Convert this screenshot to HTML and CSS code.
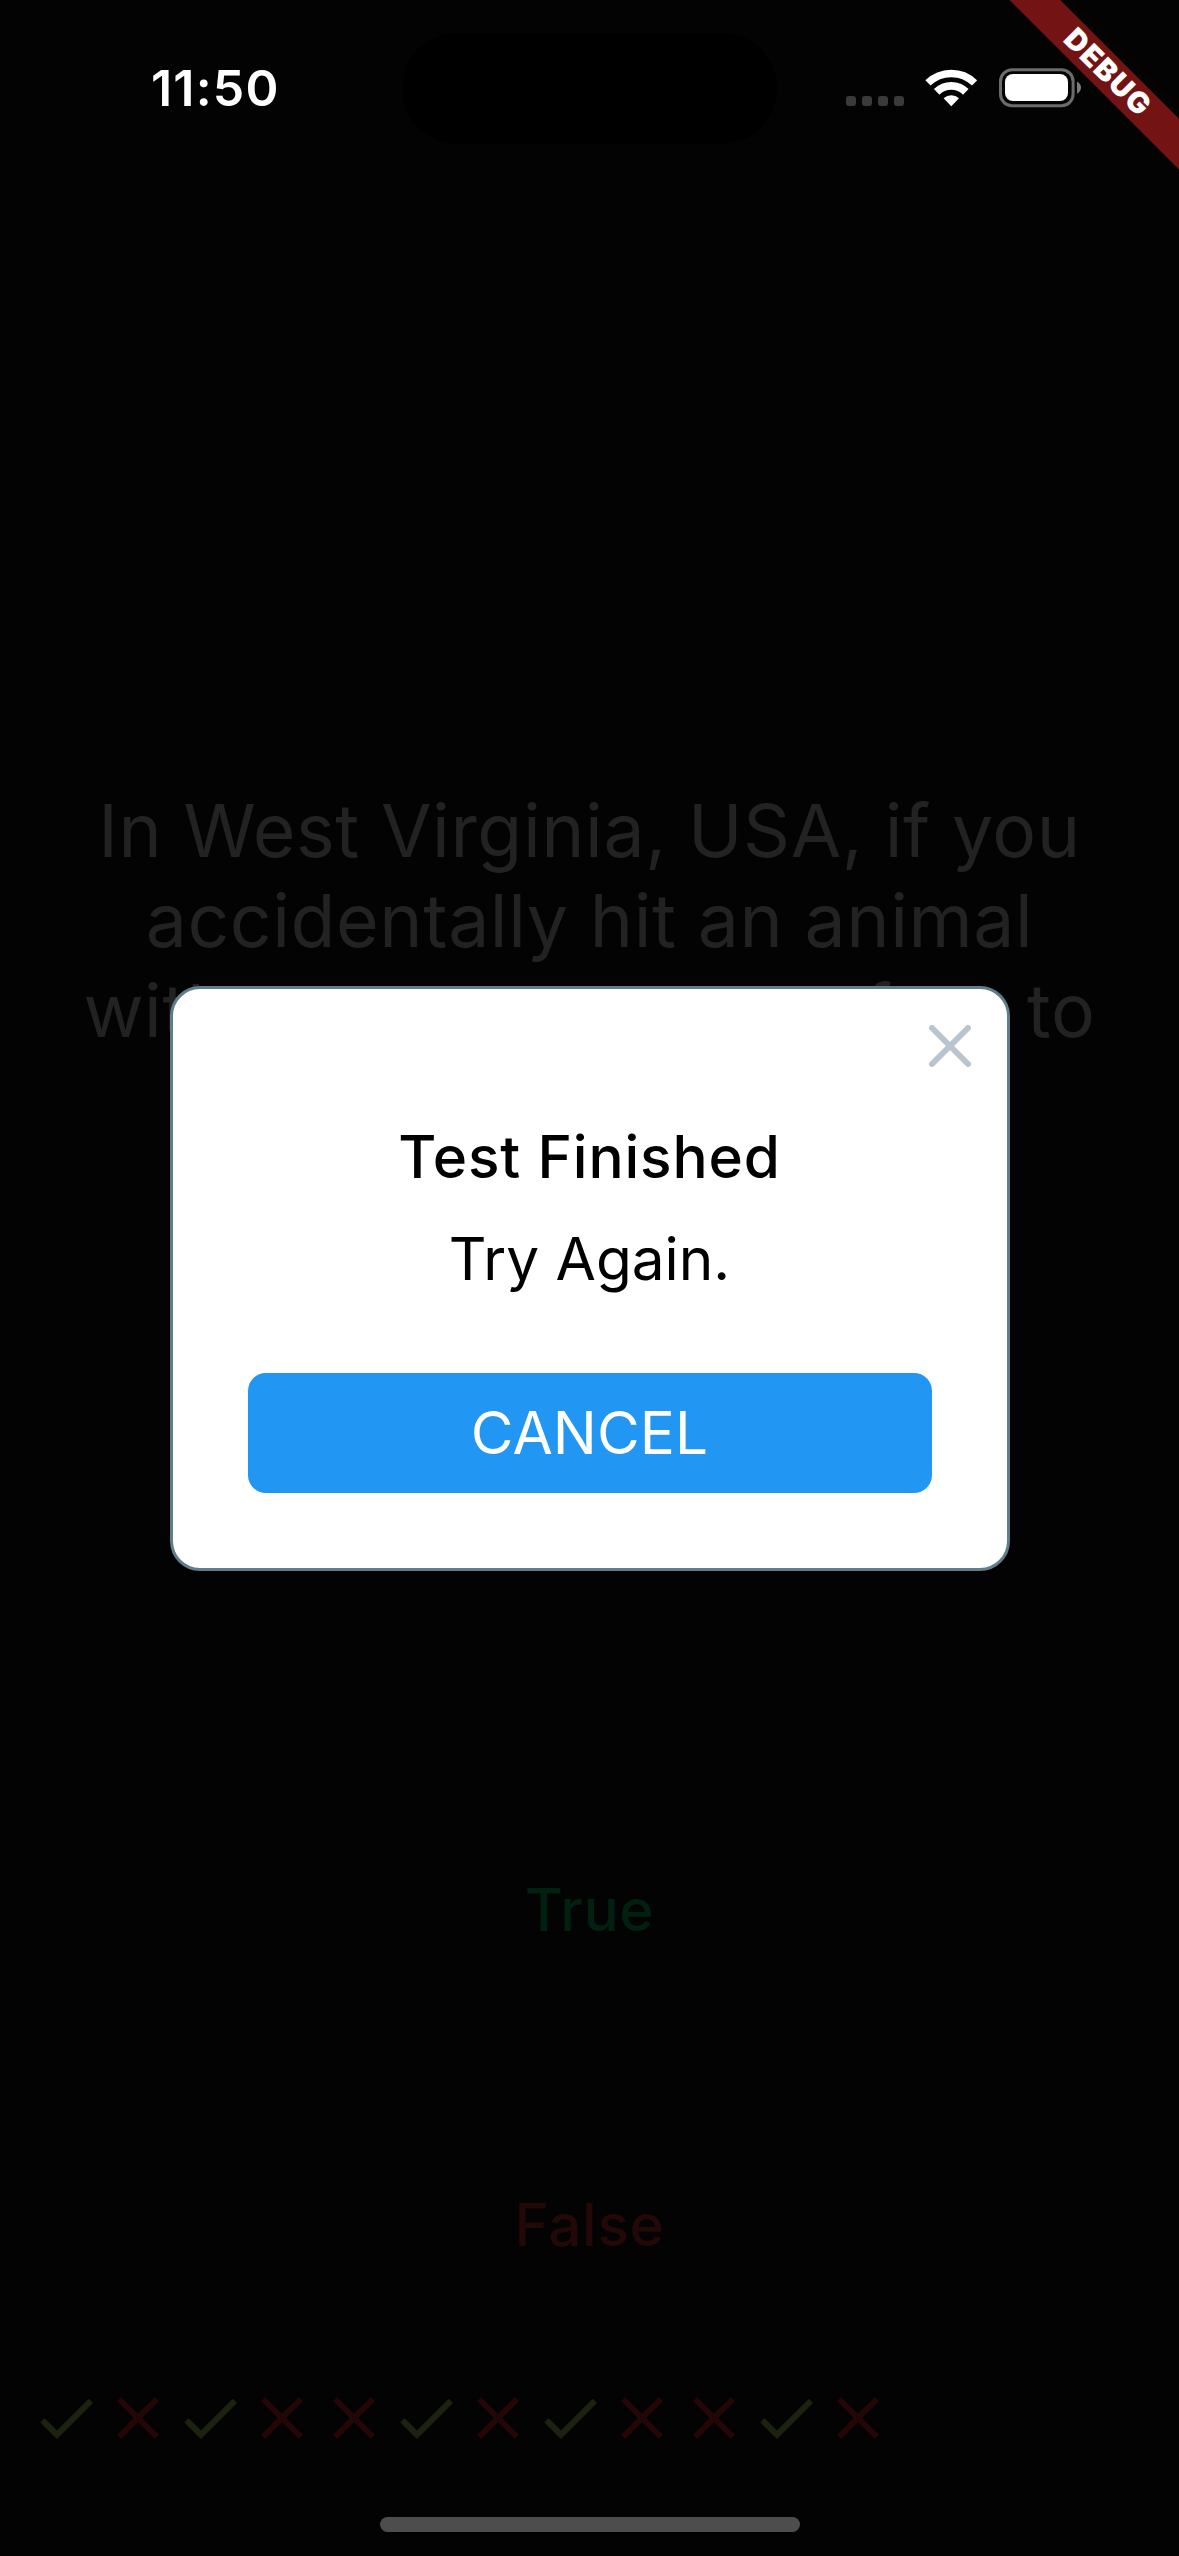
FILE: index.html
```html
<!DOCTYPE html>
<html lang="en">
<head>
<meta charset="utf-8">
<title>Quizzler</title>
<link rel="stylesheet" href="styles.css">
</head>
<body>
<svg class="sprite" aria-hidden="true">
  <symbol id="check" viewBox="0 0 24 24"><path d="M9 16.17 4.83 12l-1.42 1.41L9 19 21 7l-1.41-1.41z"/></symbol>
  <symbol id="cross" viewBox="0 0 24 24"><path d="M19 6.41 17.59 5 12 10.59 6.41 5 5 6.41 10.59 12 5 17.59 6.41 19 12 13.41 17.59 19 19 17.59 13.41 12z"/></symbol>
</svg>
<div class="screen">
  <header class="status">
    <div class="time"><span>11:50</span></div>
    <div class="island"></div>
    <div class="indicators">
      <div class="signal"><i></i><i></i><i></i><i></i></div>
      <svg class="wifi" viewBox="0 0 52 38" width="52" height="38">
        <g fill="none" stroke="#fff">
          <path stroke-width="7.4" d="M2.95 13.95A33.3 33.3 0 0 1 49.55 13.95"/>
          <path stroke-width="7.8" d="M11.66 22.86A20.7 20.7 0 0 1 40.84 22.86"/>
        </g>
        <path fill="#fff" d="M26.3 37.3 18.6 29.2A11.5 11.5 0 0 1 34 29.2Z"/>
      </svg>
      <svg class="battery" viewBox="0 0 83 40" width="83" height="40">
        <rect x="1.5" y="1.7" width="72.6" height="36" rx="11.5" fill="none" stroke="#6b6b6b" stroke-width="3"/>
        <rect x="6" y="6" width="63" height="27" rx="8" fill="#fff"/>
        <path d="M78 13.4Q82 15.6 82 19.5T78 25.8Z" fill="#7c7c7c"/>
      </svg>
    </div>
  </header>

  <main class="quiz">
    <div class="question"><p>
      <span class="line">In West Virginia, USA, if you</span>
      <span class="line">accidentally hit an animal</span>
      <span class="line">with your car, you are free to</span>
    </p></div>
    <div class="answer answer-true"><span>True</span></div>
    <div class="answer answer-false"><span>False</span></div>
    <div class="score">
      <svg class="ok"><use href="#check"/></svg>
      <svg class="no"><use href="#cross"/></svg>
      <svg class="ok"><use href="#check"/></svg>
      <svg class="no"><use href="#cross"/></svg>
      <svg class="no"><use href="#cross"/></svg>
      <svg class="ok"><use href="#check"/></svg>
      <svg class="no"><use href="#cross"/></svg>
      <svg class="ok"><use href="#check"/></svg>
      <svg class="no"><use href="#cross"/></svg>
      <svg class="no"><use href="#cross"/></svg>
      <svg class="ok"><use href="#check"/></svg>
      <svg class="no"><use href="#cross"/></svg>
    </div>
  </main>
  <div class="home"></div>

  <div class="overlay">
    <section class="dialog">
      <svg class="close" viewBox="0 0 42 42" width="42" height="42"><path d="M3 3 39 39M39 3 3 39"/></svg>
      <h1 class="title"><span>Test Finished</span></h1>
      <p class="desc"><span>Try Again.</span></p>
      <div class="cancel"><span>CANCEL</span></div>
    </section>
  </div>

  <div class="banner">
    <svg viewBox="0 0 180 180" width="180" height="180">
      <path class="ribbon" d="M10.4 0H61.3L180 118.7V169.6Z"/>
      <text class="debug" transform="translate(108.5 71.5) rotate(45)" x="1" y="10.5">DEBUG</text>
    </svg>
  </div>
</div>
</body>
</html>
```
FILE: styles.css
```css
* { box-sizing: border-box; margin: 0; padding: 0; }
body { background: #030303; font-family: Inter, "Liberation Sans", sans-serif; }
.sprite { position: absolute; width: 0; height: 0; }
.screen {
  position: relative;
  display: flex;
  flex-direction: column;
  width: 1179px;
  height: 2556px;
  overflow: hidden;
  background: #030303;
}

.status {
  display: grid;
  grid-template-columns: 402px 375px 1fr;
  height: 177px;
  padding-top: 33px;
}
.time {
  padding-left: 151px;
  padding-top: 25px;
  font-size: 50px;
  line-height: 60px;
  font-weight: 600;
  color: #fff;
  letter-spacing: 1.2px;
}
.island { height: 111px; border-radius: 55.5px; background: #000; }
.indicators { display: flex; align-items: flex-start; padding: 35px 0 0 69px; }
.signal { display: flex; gap: 6px; margin-top: 28px; }
.signal i { width: 10px; height: 10px; border-radius: 3px; background: #3a3a3a; }
.wifi { margin-left: 21px; margin-top: 1px; }
.battery { margin-left: 22px; }

.quiz { display: flex; flex-direction: column; height: 2320px; }
.question {
  display: flex;
  justify-content: center;
  height: 1577px;
  padding-top: 609px;
  font-size: 73.3px;
  line-height: 90px;
  letter-spacing: 0.57px;
  text-align: center;
  white-space: nowrap;
  color: #222;
}
.line { display: block; }
.answer {
  display: flex;
  align-items: center;
  justify-content: center;
  height: 285px;
  margin-top: 13px;
  font-size: 58.5px;
  font-weight: 500;
  letter-spacing: 0.6px;
}
.answer + .answer { margin-top: 30px; }
.answer-true { color: #002010; }
.answer-false { color: #220806; }
.score { display: flex; padding: 15px 0 0 30px; }
.score svg { width: 72px; height: 72px; }
.ok { fill: #1b230f; }
.no { fill: #220706; }
.home {
  width: 420px;
  height: 15px;
  margin: 20px auto 0 380px;
  border-radius: 7.5px;
  background: #4d4d4d;
}

.overlay {
  position: absolute;
  inset: 0;
  display: flex;
  align-items: center;
  justify-content: center;
}
.dialog {
  display: flex;
  flex-direction: column;
  width: 840px;
  height: 585px;
  padding: 36px 75px 0;
  border: 3px solid #607d8b;
  border-radius: 30px;
  background: #fff;
  color: #000;
  text-align: center;
  font-size: 58.5px;
  line-height: 72px;
}
.close {
  align-self: flex-end;
  margin-right: -39px;
  fill: none;
  stroke: #b8c4ce;
  stroke-width: 6;
  stroke-linecap: round;
}
.title { margin-top: 54px; font-size: 58.5px; font-weight: 500; letter-spacing: 0.85px; }
.desc { margin-top: 30px; }
.cancel {
  margin-top: 78px;
  height: 120px;
  line-height: 120px;
  border-radius: 18px;
  background: #2196f3;
  color: #fff;
  font-weight: 400;
  letter-spacing: 0.1px;
}

.banner { position: absolute; top: 0; right: 0; width: 180px; height: 180px; }
.ribbon { fill: #731313; }
.debug { fill: #fff; font-size: 29.5px; font-weight: 900; letter-spacing: 1.4px; text-anchor: middle; }
```
